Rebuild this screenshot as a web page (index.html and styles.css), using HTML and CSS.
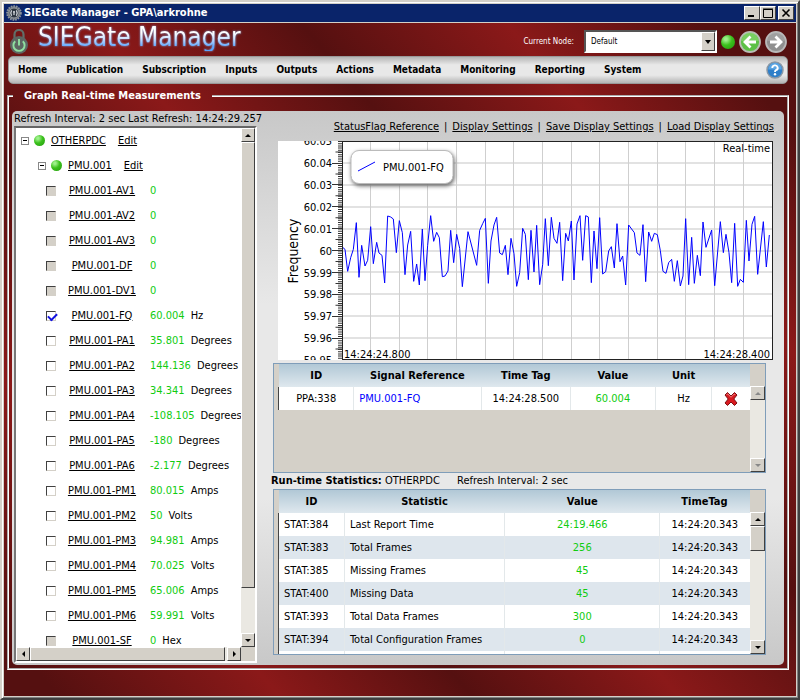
FILE: index.html
```html
<!DOCTYPE html>
<html lang="en">
<head>
<meta charset="utf-8">
<title>SIEGate Manager</title>
<link rel="stylesheet" href="styles.css">
</head>
<body>
<div class="window">
  <header class="titlebar">
    <svg class="app-icon" viewBox="0 0 16 16" aria-hidden="true">
      <circle cx="8" cy="8" r="6.8" fill="#6a7178" stroke="#8d949b" stroke-width="2" stroke-dasharray="1.6 1"/>
      <circle cx="8" cy="8" r="5" fill="#2e3740" stroke="#a9b0b6" stroke-width=".8"/>
      <path d="M5.6 5.4Q4 8 5.6 10.8M8 6v4M7 7h2M10.4 5.4Q12 8 10.4 10.8" fill="none" stroke="#d8dde0" stroke-width="1.2"/>
    </svg>
    <span class="titlebar-text">SIEGate Manager - GPA\arkrohne</span>
    <div class="window-buttons">
      <button class="win-btn" type="button" aria-label="Minimize"><svg viewBox="0 0 12 10"><path d="M2 8h6" stroke="#000" stroke-width="2"/></svg></button>
      <button class="win-btn" type="button" aria-label="Maximize"><svg viewBox="0 0 12 10"><path d="M1.5 1.5h9v8h-9zM1 1h10" fill="none" stroke="#000"/></svg></button>
      <button class="win-btn win-close" type="button" aria-label="Close"><svg viewBox="0 0 12 10"><path d="M2.5 1.5l7 7M9.500 1.500l-7 7" stroke="#000" stroke-width="1.6"/></svg></button>
    </div>
  </header>

  <div class="client">
    <div class="brand-row">
      <svg class="brand-icon" viewBox="0 0 20 26" aria-hidden="true">
        <path d="M5.500 11V5.500a4.500 4.500 0 0 1 9 0V11" fill="none" stroke="#60706a" stroke-width="2.200"/>
        <circle cx="10" cy="16" r="9" fill="#5d6662"/>
        <path d="M6.200 12.200a5.600 5.600 0 1 0 7.600 0M10 10v6.500" fill="none" stroke="#8fe0a0" stroke-width="1.900"/>
      </svg>
      <h1 class="brand">SIEGate Manager</h1>
      <div class="node-tools">
        <label class="node-label" for="node">Current Node:</label>
        <div class="node-select">
          <select id="node"><option>Default</option></select>
          <span class="node-arrow"></span>
        </div>
        <span class="led led-big"></span>
        <button class="round-btn" type="button" aria-label="Back">
          <svg viewBox="0 0 22 22"><circle cx="11" cy="11" r="10" fill="#5cc046" stroke="#b9bcb6" stroke-width="1.800"/><path d="M2.500 10a8.500 8.500 0 0 1 17 0Z" fill="#8ad873" opacity=".6"/><path d="M17 11H7M11.500 5.500L6 11l5.500 5.500" fill="none" stroke="#fff" stroke-width="2.800"/></svg>
        </button>
        <button class="round-btn" type="button" aria-label="Forward">
          <svg viewBox="0 0 22 22"><circle cx="11" cy="11" r="10" fill="#8f8f8f" stroke="#b9b9b9" stroke-width="1.800"/><path d="M2.500 10a8.500 8.500 0 0 1 17 0Z" fill="#aaa" opacity=".6"/><path d="M5 11h10M10.500 5.500L16 11l-5.500 5.500" fill="none" stroke="#fff" stroke-width="2.800"/></svg>
        </button>
      </div>
    </div>

    <nav class="menu">
      <a href="#">Home</a><a href="#">Publication</a><a href="#">Subscription</a><a href="#">Inputs</a><a href="#">Outputs</a><a href="#">Actions</a><a href="#">Metadata</a><a href="#">Monitoring</a><a href="#">Reporting</a><a href="#">System</a>
      <button class="help" type="button" aria-label="Help">
        <svg viewBox="0 0 18 18"><circle cx="9" cy="9" r="8" fill="#2f7fc9" stroke="#8b98a5" stroke-width="1.500"/><path d="M2.200 8.500a6.800 6.800 0 0 1 13.600 0Z" fill="#6db4ec" opacity=".7"/><path d="M6.300 7A2.700 2.500 0 1 1 10 9.200Q9 9.700 9 11" fill="none" stroke="#fff" stroke-width="1.900"/><circle cx="9" cy="13.300" r="1.200" fill="#fff"/></svg>
      </button>
    </nav>

    <fieldset class="group">
      <legend>Graph Real-time Measurements</legend>
      <div class="panel">
        <section class="left">
          <div class="refresh">Refresh Interval: 2 sec Last Refresh: 14:24:29.257</div>
          <div class="tree-box">
            <div class="tree">
              <div class="node"><button class="toggle" type="button" aria-label="Collapse"></button><span class="led"></span><a href="#">OTHERPDC</a><a class="edit" href="#">Edit</a></div>
              <div class="node node-child"><button class="toggle" type="button" aria-label="Collapse"></button><span class="led"></span><a href="#">PMU.001</a><a class="edit" href="#">Edit</a></div>
              <div class="leaf"><input type="checkbox" aria-label="PMU.001-AV1" disabled><a href="#">PMU.001-AV1</a><b>0</b></div>
              <div class="leaf"><input type="checkbox" aria-label="PMU.001-AV2" disabled><a href="#">PMU.001-AV2</a><b>0</b></div>
              <div class="leaf"><input type="checkbox" aria-label="PMU.001-AV3" disabled><a href="#">PMU.001-AV3</a><b>0</b></div>
              <div class="leaf"><input type="checkbox" aria-label="PMU.001-DF" disabled><a href="#">PMU.001-DF</a><b>0</b></div>
              <div class="leaf"><input type="checkbox" aria-label="PMU.001-DV1" disabled><a href="#">PMU.001-DV1</a><b>0</b></div>
              <div class="leaf"><input type="checkbox" aria-label="PMU.001-FQ" checked><a href="#">PMU.001-FQ</a><b>60.004</b><i>Hz</i></div>
              <div class="leaf"><input type="checkbox" aria-label="PMU.001-PA1"><a href="#">PMU.001-PA1</a><b>35.801</b><i>Degrees</i></div>
              <div class="leaf"><input type="checkbox" aria-label="PMU.001-PA2"><a href="#">PMU.001-PA2</a><b>144.136</b><i>Degrees</i></div>
              <div class="leaf"><input type="checkbox" aria-label="PMU.001-PA3"><a href="#">PMU.001-PA3</a><b>34.341</b><i>Degrees</i></div>
              <div class="leaf"><input type="checkbox" aria-label="PMU.001-PA4"><a href="#">PMU.001-PA4</a><b>-108.105</b><i>Degrees</i></div>
              <div class="leaf"><input type="checkbox" aria-label="PMU.001-PA5"><a href="#">PMU.001-PA5</a><b>-180</b><i>Degrees</i></div>
              <div class="leaf"><input type="checkbox" aria-label="PMU.001-PA6"><a href="#">PMU.001-PA6</a><b>-2.177</b><i>Degrees</i></div>
              <div class="leaf"><input type="checkbox" aria-label="PMU.001-PM1"><a href="#">PMU.001-PM1</a><b>80.015</b><i>Amps</i></div>
              <div class="leaf"><input type="checkbox" aria-label="PMU.001-PM2"><a href="#">PMU.001-PM2</a><b>50</b><i>Volts</i></div>
              <div class="leaf"><input type="checkbox" aria-label="PMU.001-PM3"><a href="#">PMU.001-PM3</a><b>94.981</b><i>Amps</i></div>
              <div class="leaf"><input type="checkbox" aria-label="PMU.001-PM4"><a href="#">PMU.001-PM4</a><b>70.025</b><i>Volts</i></div>
              <div class="leaf"><input type="checkbox" aria-label="PMU.001-PM5"><a href="#">PMU.001-PM5</a><b>65.006</b><i>Amps</i></div>
              <div class="leaf"><input type="checkbox" aria-label="PMU.001-PM6"><a href="#">PMU.001-PM6</a><b>59.991</b><i>Volts</i></div>
              <div class="leaf"><input type="checkbox" aria-label="PMU.001-SF" disabled><a href="#">PMU.001-SF</a><b>0</b><i>Hex</i></div>
            </div>
            <div class="vbar">
              <span class="bar-btn up"></span><span class="thumb tree-vthumb"></span><span class="track"></span><span class="bar-btn down"></span>
            </div>
            <div class="hbar">
              <span class="bar-btn prev"></span><span class="thumb tree-hthumb"></span><span class="bar-btn next"></span>
            </div>
            <div class="corner"></div>
          </div>
        </section>

        <section class="right">
          <div class="links">
            <a href="#">StatusFlag Reference</a><span>|</span><a href="#">Display Settings</a><span>|</span><a href="#">Save Display Settings</a><span>|</span><a href="#">Load Display Settings</a>
          </div>

          <svg class="chart" viewBox="0 0 495 219" role="img" aria-label="Frequency of PMU.001-FQ">
            <rect width="495" height="219" fill="#fff"/>
            <path class="grid-h" d="M65 22H494M65 44H494M65 66H494M65 88H494M65 110H494M65 131H494M65 153H494M65 175H494M65 197H494"/>
            <path class="grid-v" d="M92.500 0V219M121.500 0V219M149.500 0V219M178.500 0V219M207.500 0V219M235.500 0V219M264.500 0V219M293.500 0V219M321.500 0V219M350.500 0V219M379.500 0V219M407.500 0V219M436.500 0V219M465.500 0V219"/>
            <g transform="matrix(.33333 0 0 .33333 -8 -31)">
              <polyline class="trace" points="218,412 225,418 233,484 242,443 250,418 259,338 267,502 275,406 285,468 293,451 302,350 310,461 320,397 327,429 336,436 344,519 353,318 362,321 370,327 379,428 388,332 397,368 405,494 413,405 422,364 431,514 440,462 448,525 457,357 465,512 473,406 482,317 491,394 500,367 508,383 517,500 525,498 534,483 542,361 551,458 560,373 569,415 577,530 594,365 620,466 629,361 638,341 646,325 655,520 663,393 672,345 680,322 689,429 697,434 706,406 714,494 723,385 732,431 740,529 749,488 758,355 766,373 775,509 783,361 792,486 800,346 809,524 818,464 826,326 835,467 844,322 852,385 861,400 869,337 878,512 887,370 895,393 904,333 912,510 921,342 930,317 938,451 947,317 955,321 964,518 972,363 981,476 989,323 998,492 1007,485 1016,423 1024,410 1033,474 1041,341 1050,455 1058,438 1067,525 1076,345 1093,368 1101,429 1110,436 1119,344 1127,515 1136,366 1145,394 1153,370 1162,374 1171,422 1179,484 1188,490 1196,458 1205,448 1213,514 1222,452 1231,528 1239,498 1247,326 1256,524 1265,382 1273,520 1282,436 1291,497 1299,336 1308,412 1325,360 1334,527 1351,335 1360,428 1368,373 1377,428 1385,518 1394,340 1403,529 1411,508 1420,517 1429,331 1437,453 1446,343 1454,319 1463,493 1480,335 1489,471 1498,375"/>
            </g>
            <path d="M62 0V219" stroke="#333" stroke-width="4" stroke-dasharray="1 1.190"/>
            <path d="M61 10.500V219" stroke="#333" stroke-width="7" stroke-dasharray="1 20.900"/>
            <path d="M54 22.500h10M54 43.500h10M54 65.500h10M54 87.500h10M54 109.500h10M54 131.500h10M54 153.500h10M54 175.500h10M54 197.500h10" stroke="#333"/>
            <rect x="64.500" y=".5" width="430" height="218" fill="none" stroke="#222"/>
            <g class="axis">
              <text x="54" y="4">60.05</text><text x="54" y="26">60.04</text><text x="54" y="48">60.03</text><text x="54" y="70">60.02</text><text x="54" y="92">60.01</text><text x="54" y="114">60</text><text x="54" y="136">59.99</text><text x="54" y="157">59.98</text><text x="54" y="179">59.97</text><text x="54" y="201">59.96</text><text x="54" y="223">59.95</text>
              <text x="492" y="11">Real-time</text><text x="492" y="217">14:24:28.400</text>
            </g>
            <text class="chart-text" x="66" y="217">14:24:24.800</text>
            <text class="axis-title" transform="translate(20 110) rotate(-90)">Frequency</text>
            <rect class="legend-box" x="73" y="9.500" width="102" height="33" rx="8"/>
            <path class="trace-key" d="M80 30L97 21"/>
            <text class="chart-text" x="105" y="30">PMU.001-FQ</text>
          </svg>

          <div class="grid signal-grid">
            <table>
              <colgroup><col class="w16"><col class="w27"><col class="w19"><col class="w18"><col class="w12"><col></colgroup>
              <thead><tr><th>ID</th><th>Signal Reference</th><th>Time Tag</th><th>Value</th><th>Unit</th><th></th></tr></thead>
              <tbody><tr><td class="c">PPA:338</td><td class="blue">PMU.001-FQ</td><td class="c">14:24:28.500</td><td class="green">60.004</td><td class="c">Hz</td><td class="c"><button class="remove" type="button" aria-label="Remove"><svg viewBox="0 0 16 16"><path d="M2 4l2.500-2.500L8 5l3.500-3.500L14 4l-3.200 4L14 12l-2.500 2.500L8 11l-3.500 3.500L2 12l3.200-4Z" fill="#d8191f" stroke="#7d1013"/><path d="M3.500 4l1.200-1.200L8 6.300l3.300-3.300 1 1" fill="none" stroke="#ef7f80"/></svg></button></td></tr></tbody>
            </table>
            <div class="vbar off"><span class="bar-btn up"></span><span class="track"></span><span class="bar-btn down"></span></div>
          </div>

          <div class="stat-title"><strong>Run-time Statistics:</strong> OTHERPDC <span>Refresh Interval: 2 sec</span></div>

          <div class="grid stat-grid">
            <table>
              <colgroup><col class="w14"><col class="w34"><col class="w33"><col></colgroup>
              <thead><tr><th>ID</th><th>Statistic</th><th>Value</th><th>TimeTag</th></tr></thead>
              <tbody>
                <tr><td>STAT:384</td><td>Last Report Time</td><td class="green">24:19.466</td><td class="c">14:24:20.343</td></tr>
                <tr><td>STAT:383</td><td>Total Frames</td><td class="green">256</td><td class="c">14:24:20.343</td></tr>
                <tr><td>STAT:385</td><td>Missing Frames</td><td class="green">45</td><td class="c">14:24:20.343</td></tr>
                <tr><td>STAT:400</td><td>Missing Data</td><td class="green">45</td><td class="c">14:24:20.343</td></tr>
                <tr><td>STAT:393</td><td>Total Data Frames</td><td class="green">300</td><td class="c">14:24:20.343</td></tr>
                <tr><td>STAT:394</td><td>Total Configuration Frames</td><td class="green">0</td><td class="c">14:24:20.343</td></tr>
                <tr><td></td><td></td><td></td><td></td></tr>
              </tbody>
            </table>
            <div class="vbar"><span class="bar-btn up"></span><span class="thumb stat-thumb"></span><span class="track"></span><span class="bar-btn down"></span></div>
          </div>
        </section>
      </div>
    </fieldset>
  </div>
</div>
</body>
</html>
```
FILE: styles.css
```css
* { box-sizing: border-box; }

body {
  margin: 0;
  font: 11px/14px "DejaVu Sans Condensed", "Noto Sans", sans-serif;
  color: #000;
}

button { padding: 0; border: 0; background: none; display: block; }
svg { display: block; }

.window {
  min-height: 100vh;
  display: flex;
  flex-direction: column;
  padding: 2px;
  background: #d4d0c8;
  border: 2px solid #d4d0c8;
  border-right-color: #404040;
  border-bottom-color: #404040;
  box-shadow: inset 1px 1px #fff, inset -1px -1px #808080;
}

.titlebar {
  height: 18px;
  display: flex;
  align-items: center;
  gap: 2px;
  padding: 0 2px;
  background: #0a246a;
  color: #fff;
}
.app-icon { width: 16px; height: 16px; }
.titlebar-text { flex: 1; font-size: 11px; font-weight: bold; }
.window-buttons { display: flex; }
.win-btn {
  width: 16px;
  height: 14px;
  padding: 1px;
  background: #d4d0c8;
  border: 1px solid;
  border-color: #fff #404040 #404040 #fff;
}
.win-btn svg { width: 12px; height: 10px; }
.win-close { margin-left: 2px; }

.client {
  flex: 1;
  margin-top: 1px;
  padding: 0 8px 25px 4px;
  background: linear-gradient(49deg, #551010 4%, #8b1919 20%, #551010 34%, #8b1919 49%, #551010 64%, #8b1919 79%, #551010 93%);
}

.brand-row { height: 33px; display: flex; align-items: flex-start; padding-right: 1px; }
.brand-icon { width: 20px; height: 26px; margin: 6px 0 0 1px; }
.brand {
  margin: 0 auto 0 9px;
  font: 26px/28px "DejaVu Sans Condensed", sans-serif;
  background: linear-gradient(#fff 35%, #cfe4ff 55%, #5aa4ff 85%);
  background-clip: text;
  color: transparent;
  filter: drop-shadow(0 0 1px #7fa8e0);
}
.node-tools { display: flex; align-items: center; padding-top: 7px; }
.node-label { color: #fff; font-size: 8px; margin-right: 10px; }
.node-select { position: relative; width: 133px; height: 23px; }
.node-select select {
  width: 100%;
  height: 100%;
  appearance: none;
  border: 2px solid;
  border-color: #555 #fff #fff #555;
  border-radius: 0;
  padding: 0 5px;
  background: #fff;
  color: #000;
  font: 8px/14px "DejaVu Sans Condensed", sans-serif;
}
.node-arrow {
  position: absolute;
  top: 2px;
  right: 2px;
  bottom: 2px;
  width: 14px;
  background: #d4d0c8;
  border: 1px solid;
  border-color: #fff #404040 #404040 #fff;
  pointer-events: none;
}
.node-arrow::after {
  content: "";
  display: block;
  margin: 7px 0 0 3px;
  width: 0;
  border: 3px solid transparent;
  border-top: 4px solid #000;
  border-bottom: 0;
}
.round-btn svg { width: 22px; height: 22px; }
.round-btn { margin-left: 4px; }

.led {
  width: 11px;
  height: 11px;
  border-radius: 50%;
  background: radial-gradient(circle at 35% 30%, #9df08a 0 10%, #3cc11d 45%, #229a0c);
  flex: none;
}
.led-big { width: 14px; height: 14px; margin-left: 4px; }

.menu {
  height: 28px;
  display: flex;
  align-items: center;
  gap: 19px;
  padding: 0 3px 0 9px;
  border: 1px solid #999;
  border-radius: 5px;
  background: linear-gradient(#b4b4b4, #e8e8e8 30%, #e8e8e8 70%, #b4b4b4);
}
.menu a { color: #000; font-size: 10px; font-weight: bold; text-decoration: none; }
.help { margin-left: auto; }
.help svg { width: 18px; height: 18px; }

.group {
  min-width: 0;
  margin: 5px -1px 0 -1px;
  padding: 8px 3px 3px 3px;
  border: 2px groove #fff;
}
.group legend {
  margin-left: 1px;
  padding: 0 11px;
  color: #fff;
  font-weight: bold;
}

.panel {
  display: flex;
  gap: 16px;
  padding: 1px 10px 2px 2px;
  border-radius: 5px;
  background: linear-gradient(#c8c8c8, #e8e8e8 35%, #e8e8e8 70%, #c8c8c8);
}

.left { flex: none; width: 243px; white-space: nowrap; }
.tree-box {
  height: 537px;
  display: grid;
  grid-template-columns: minmax(0, 1fr) 14px;
  grid-template-rows: minmax(0, 1fr) 14px;
  background: #fff;
  border: 2px solid;
  border-color: #666 #fff #fff #777;
}
.tree { overflow: hidden; }
a { color: #000; }
.node, .leaf { height: 25px; display: flex; align-items: center; }
.node { padding-left: 5px; }
.node-child { padding-left: 22px; }
.toggle {
  width: 8px;
  height: 8px;
  border: 1px solid #888;
  background: linear-gradient(#000, #000) center / 4px 1px no-repeat #fff;
}
.node .led { margin: 0 6px 0 5px; }
.edit { margin-left: 12px; }
.leaf { padding-left: 30px; }
.leaf input {
  appearance: none;
  width: 10px;
  height: 10px;
  margin: 0;
  flex: none;
  background: #fff;
  border: 1px solid;
  border-color: #404040 #d4d0c8 #d4d0c8 #404040;
}
.leaf input:disabled { background: #d4d0c8; }
.leaf input:checked::after {
  content: "";
  display: block;
  width: 7px;
  height: 4px;
  margin: 1px 0 0 1px;
  border: solid #1111e0;
  border-width: 0 0 2px 2px;
  transform: rotate(-45deg);
}
.leaf a { flex: none; width: 84px; margin-left: 4px; text-align: center; }
.leaf b, .leaf i { font-weight: normal; font-style: normal; }
.leaf b { color: #1c1; margin-left: 6px; }
.leaf i { margin-left: 6px; }

.vbar { display: flex; flex-direction: column; background: #eae8e2; }
.hbar { display: flex; background: #eae8e2; }
.corner { background: #d4d0c8; }
.track { flex: 1; }
.bar-btn, .thumb {
  background: #d4d0c8;
  border: 1px solid;
  border-color: #fff #404040 #404040 #fff;
}
.bar-btn { flex: none; width: 14px; height: 14px; display: grid; place-items: center; }
.bar-btn::after { content: ""; width: 0; height: 0; border: 3px solid transparent; }
.up::after { border-top: 0; border-bottom-color: #000; }
.down::after { border-bottom: 0; border-top-color: #000; }
.prev::after { border-left: 0; border-right-color: #000; }
.next::after { border-right: 0; border-left-color: #000; }
.off .up::after { border-bottom-color: #888; }
.off .down::after { border-top-color: #888; }
.tree-vthumb { height: 446px; }
.tree-hthumb { flex: 1; margin-right: 2px; }

.right { flex: 1; min-width: 0; padding-top: 8px; }
.links { display: flex; justify-content: flex-end; white-space: nowrap; }
.links span { margin: 0 5px; }
.chart { width: calc(100% - 5px); max-width: 495px; margin: 7px 0 3px 5px; overflow: hidden; }
.grid-h { stroke: #e2e2e2; stroke-width: 2; }
.grid-v { stroke: #cfcfcf; }
.trace { fill: none; stroke: #00f; stroke-width: 3; }
.trace-key { stroke: #00f; }
.chart text { font-size: 11px; }
.axis text { text-anchor: end; }
.chart .axis-title { font-size: 14px; text-anchor: middle; }
.legend-box { fill: #fff; stroke: #bbb; filter: drop-shadow(1px 2px 2px #666); }

.grid {
  margin-right: 8px;
  display: flex;
  align-items: flex-start;
  overflow: hidden;
  padding-left: 4px;
  background: #d4d0c8;
  border: 1px solid #7f9db9;
}
.signal-grid { height: 110px; }
.stat-grid { height: 166px; }
.grid table { flex: 1; min-width: 0; table-layout: fixed; border-collapse: collapse; }
.grid .vbar { flex: none; width: 15px; align-self: stretch; margin-top: 22px; }
.grid .bar-btn { width: 15px; }
.stat-thumb { height: 25px; }
.grid th { height: 23px; padding: 0; background: linear-gradient(#b1c8d6, #dfe8ee); }
.grid td { height: 23px; padding: 0 5px; background: #fff; border-right: 1px solid #e3e8ea; white-space: nowrap; }
.grid td:first-child { border-left: 1px solid #444; }
.grid td:last-child { border-right: 0; }
.grid tbody tr:nth-child(even) td { background: #dee6ed; }
.grid .c { text-align: center; }
.grid .green { color: #1c1; text-align: center; }
.grid .blue { color: #00f; }
.remove { margin: 0 auto; }
.remove svg { width: 16px; height: 16px; }
.w16 { width: 16%; } .w27 { width: 27%; } .w19 { width: 19%; } .w18 { width: 18%; } .w12 { width: 12%; }
.w14 { width: 14%; } .w34 { width: 34%; } .w33 { width: 33%; }

.stat-title { margin: 1px 0 1px -2px; }
.stat-title span { margin-left: 14px; }
```
